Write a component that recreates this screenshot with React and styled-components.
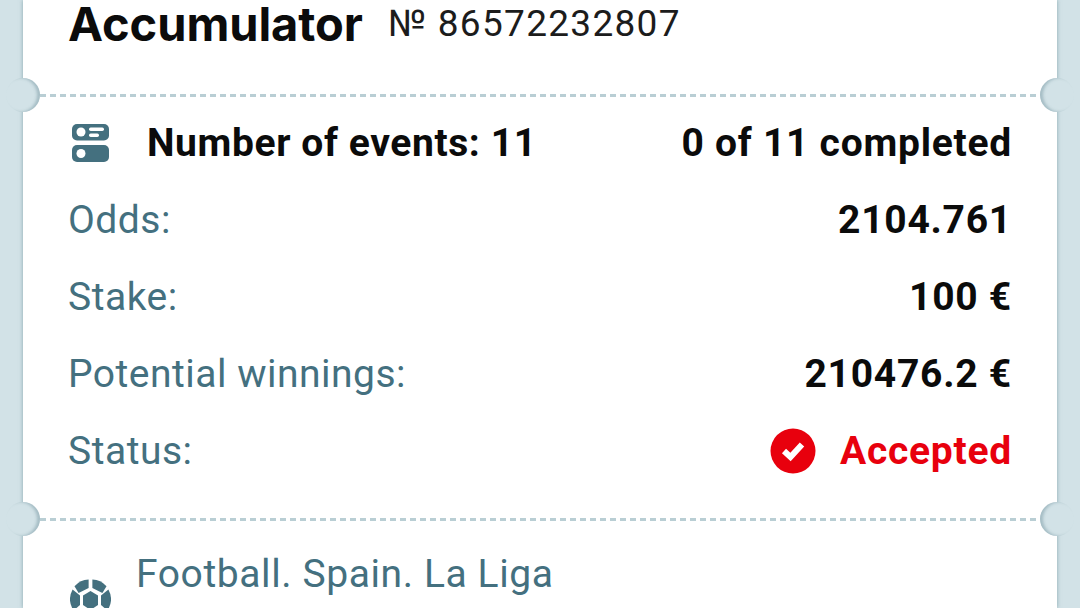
import React from 'react'
import styled, { createGlobalStyle } from 'styled-components'

const GlobalStyle = createGlobalStyle`
  html, body {
    margin: 0;
    height: 100%;
    overflow: hidden;
    background: #d2e2e7;
    font-family: Roboto, "Liberation Sans", sans-serif;
  }
`

const Page = styled.div`
  width: 1080px;
  height: 608px;
  overflow: hidden;
  padding: 0 23px;
  box-sizing: border-box;
`

const Ticket = styled.div`
  height: 608px;
  background: #fff;
  box-shadow: 0 0 4px rgba(110, 145, 155, 0.75);
`

const Header = styled.div`
  height: 47px;
  padding-left: 45px;
  display: flex;
  align-items: center;
  gap: 25px;
`

const Title = styled.h1`
  margin: 0;
  font-family: Inter, "Liberation Sans", sans-serif;
  font-size: 47px;
  line-height: 47px;
  font-weight: 700;
  letter-spacing: -0.05px;
  color: #0b0b0b;
`

const Number = styled.span`
  font-size: 37px;
  letter-spacing: 1.3px;
  color: #1c1c1c;
`

const Divider = styled.div`
  position: relative;
  margin-top: ${p => p.$top}px;
  height: 3px;
  margin-left: 17px;
  margin-right: 17px;
  background-image: linear-gradient(to right, #b9ced4 6px, transparent 6px);
  background-size: 10px 3px;
`

const Notch = styled.span`
  position: absolute;
  top: -16px;
  ${p => (p.$right ? 'right: -34px;' : 'left: -34px;')}
  width: 34px;
  height: 34px;
  background: #d2e2e7;
  border-radius: 50%;
  box-shadow: inset ${p => (p.$right ? '3px' : '-3px')} 0 3px rgba(110, 145, 155, 0.45);
`

const Details = styled.div`
  padding: 7px 45px 0;
  height: 414px;
  box-sizing: border-box;
`

const Row = styled.div`
  height: 77px;
  display: flex;
  align-items: center;
  justify-content: space-between;
  font-size: 39px;
  letter-spacing: 0.5px;
`

const Label = styled.span`
  color: #44707f;
`

const Value = styled.span`
  font-weight: 700;
  letter-spacing: 0.75px;
  color: ${p => p.$color || '#0b0b0b'};
  display: flex;
  align-items: center;
  gap: 24px;
`

const Events = styled.span`
  display: flex;
  align-items: center;
  gap: 38px;
  padding-left: 4px;
  font-weight: 700;
  letter-spacing: 0.6px;
  color: #0b0b0b;
`

const EventRow = styled.div`
  position: relative;
  padding: 28px 0 0 113px;
  font-size: 39px;
  letter-spacing: 0.6px;
  color: #44707f;
  line-height: 50px;
`

const BallIcon = styled.svg`
  position: absolute;
  left: 47px;
  top: 58px;
`

const Ball = () => (
  <BallIcon width="41" height="41" viewBox="0 0 41 41" fill="#44707f">
    <path d="M4.5 7.2 A20.5 20.5 0 0 1 18.6 .6 L18.6 9 L8.6 14 Z" />
    <path d="M36.5 7.2 A20.5 20.5 0 0 0 22.4 .6 L22.4 9 L32.4 14 Z" />
    <path d="M20.5 12 L28 16.5 L28 26 L20.5 31 L13 26 L13 16.5 Z" />
    <path d="M2.6 10.5 L10 16.5 L10 26 L3.6 31.5 A20.5 20.5 0 0 1 2.6 10.5 Z" />
    <path d="M38.4 10.5 L31 16.5 L31 26 L37.4 31.5 A20.5 20.5 0 0 0 38.4 10.5 Z" />
  </BallIcon>
)

const EventsIcon = () => (
  <svg width="37" height="38" viewBox="0 0 37 38" fill="#44707f">
    <rect x="0" y="0" width="37" height="16.5" rx="5" />
    <circle cx="9" cy="8" r="4.5" fill="#fff" />
    <rect x="17" y="3.5" width="15" height="3.5" rx="1.7" fill="#fff" />
    <rect x="17" y="9.5" width="10" height="3.5" rx="1.7" fill="#fff" />
    <rect x="0" y="21" width="37" height="17" rx="5" />
    <circle cx="9" cy="29.5" r="4.5" fill="#fff" />
  </svg>
)

const CheckIcon = () => (
  <svg width="46" height="46" viewBox="0 0 46 46">
    <circle cx="23" cy="23" r="22.5" fill="#e8000d" />
    <path d="M14 23 L20.5 29 L32 16.5" fill="none" stroke="#fff" strokeWidth="6" />
  </svg>
)

const rows = [
  { label: 'Odds:', value: '2104.761' },
  { label: 'Stake:', value: '100 €' },
  { label: 'Potential winnings:', value: '210476.2 €' },
]

const App = () => (
  <Page>
    <GlobalStyle />
    <Ticket>
      <Header>
        <Title>Accumulator</Title>
        <Number>№ 86572232807</Number>
      </Header>
      <Divider $top={47}>
        <Notch />
        <Notch $right />
      </Divider>
      <Details>
        <Row>
          <Events>
            <EventsIcon />
            Number of events: 11
          </Events>
          <Value>0 of 11 completed</Value>
        </Row>
        {rows.map(row => (
          <Row key={row.label}>
            <Label>{row.label}</Label>
            <Value>{row.value}</Value>
          </Row>
        ))}
        <Row>
          <Label>Status:</Label>
          <Value $color="#e8000d">
            <CheckIcon />
            Accepted
          </Value>
        </Row>
      </Details>
      <Divider $top={7}>
        <Notch />
        <Notch $right />
      </Divider>
      <EventRow>
        <Ball />
        Football. Spain. La Liga
      </EventRow>
    </Ticket>
  </Page>
)

export default App
